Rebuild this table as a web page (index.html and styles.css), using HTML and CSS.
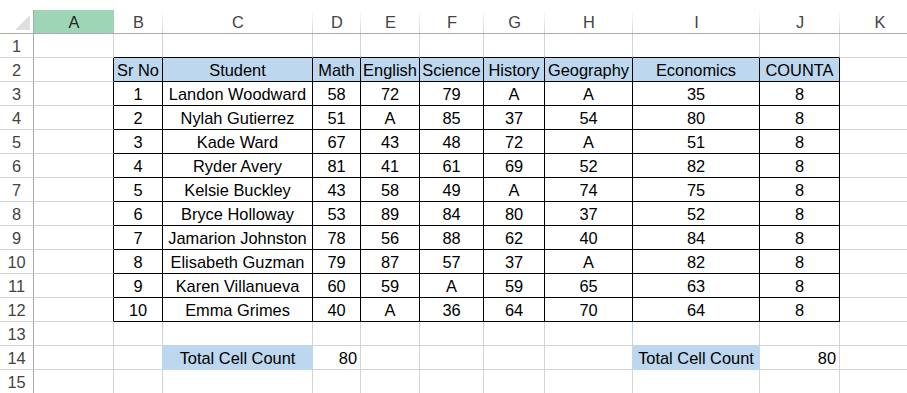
FILE: index.html
```html
<!DOCTYPE html>
<html>
<head>
<meta charset="utf-8">
<link rel="stylesheet" href="styles.css">
</head>
<body>
<div class="sheet">
  <div class="row hdr">
    <div class="corner"><span class="tri"></span></div>
    <div class="ch sel">A</div><div class="ch">B</div><div class="ch">C</div><div class="ch">D</div><div class="ch">E</div><div class="ch">F</div><div class="ch">G</div><div class="ch">H</div><div class="ch">I</div><div class="ch">J</div><div class="ch">K</div>
  </div>
  <div class="row">
    <div class="rh">1</div>
    <div class="c"></div><div class="c tt"></div><div class="c tt"></div><div class="c tt"></div><div class="c tt"></div><div class="c tt"></div><div class="c tt"></div><div class="c tt"></div><div class="c tt"></div><div class="c tt"></div><div class="c"></div>
  </div>
  <div class="row">
    <div class="rh">2</div>
    <div class="c tl"></div><div class="c t th">Sr No</div><div class="c t th">Student</div><div class="c t th">Math</div><div class="c t th">English</div><div class="c t th">Science</div><div class="c t th">History</div><div class="c t th">Geography</div><div class="c t th">Economics</div><div class="c t th">COUNTA</div><div class="c"></div>
  </div>
  <div class="row">
    <div class="rh">3</div>
    <div class="c tl"></div><div class="c t">1</div><div class="c t">Landon Woodward</div><div class="c t">58</div><div class="c t">72</div><div class="c t">79</div><div class="c t">A</div><div class="c t">A</div><div class="c t">35</div><div class="c t">8</div><div class="c"></div>
  </div>
  <div class="row">
    <div class="rh">4</div>
    <div class="c tl"></div><div class="c t">2</div><div class="c t">Nylah Gutierrez</div><div class="c t">51</div><div class="c t">A</div><div class="c t">85</div><div class="c t">37</div><div class="c t">54</div><div class="c t">80</div><div class="c t">8</div><div class="c"></div>
  </div>
  <div class="row">
    <div class="rh">5</div>
    <div class="c tl"></div><div class="c t">3</div><div class="c t">Kade Ward</div><div class="c t">67</div><div class="c t">43</div><div class="c t">48</div><div class="c t">72</div><div class="c t">A</div><div class="c t">51</div><div class="c t">8</div><div class="c"></div>
  </div>
  <div class="row">
    <div class="rh">6</div>
    <div class="c tl"></div><div class="c t">4</div><div class="c t">Ryder Avery</div><div class="c t">81</div><div class="c t">41</div><div class="c t">61</div><div class="c t">69</div><div class="c t">52</div><div class="c t">82</div><div class="c t">8</div><div class="c"></div>
  </div>
  <div class="row">
    <div class="rh">7</div>
    <div class="c tl"></div><div class="c t">5</div><div class="c t">Kelsie Buckley</div><div class="c t">43</div><div class="c t">58</div><div class="c t">49</div><div class="c t">A</div><div class="c t">74</div><div class="c t">75</div><div class="c t">8</div><div class="c"></div>
  </div>
  <div class="row">
    <div class="rh">8</div>
    <div class="c tl"></div><div class="c t">6</div><div class="c t">Bryce Holloway</div><div class="c t">53</div><div class="c t">89</div><div class="c t">84</div><div class="c t">80</div><div class="c t">37</div><div class="c t">52</div><div class="c t">8</div><div class="c"></div>
  </div>
  <div class="row">
    <div class="rh">9</div>
    <div class="c tl"></div><div class="c t">7</div><div class="c t">Jamarion Johnston</div><div class="c t">78</div><div class="c t">56</div><div class="c t">88</div><div class="c t">62</div><div class="c t">40</div><div class="c t">84</div><div class="c t">8</div><div class="c"></div>
  </div>
  <div class="row">
    <div class="rh">10</div>
    <div class="c tl"></div><div class="c t">8</div><div class="c t">Elisabeth Guzman</div><div class="c t">79</div><div class="c t">87</div><div class="c t">57</div><div class="c t">37</div><div class="c t">A</div><div class="c t">82</div><div class="c t">8</div><div class="c"></div>
  </div>
  <div class="row">
    <div class="rh">11</div>
    <div class="c tl"></div><div class="c t">9</div><div class="c t">Karen Villanueva</div><div class="c t">60</div><div class="c t">59</div><div class="c t">A</div><div class="c t">59</div><div class="c t">65</div><div class="c t">63</div><div class="c t">8</div><div class="c"></div>
  </div>
  <div class="row">
    <div class="rh">12</div>
    <div class="c tl"></div><div class="c t">10</div><div class="c t">Emma Grimes</div><div class="c t">40</div><div class="c t">A</div><div class="c t">36</div><div class="c t">64</div><div class="c t">70</div><div class="c t">64</div><div class="c t">8</div><div class="c"></div>
  </div>
  <div class="row">
    <div class="rh">13</div>
    <div class="c"></div><div class="c"></div><div class="c bb"></div><div class="c"></div><div class="c"></div><div class="c"></div><div class="c"></div><div class="c br"></div><div class="c bb"></div><div class="c"></div><div class="c"></div>
  </div>
  <div class="row">
    <div class="rh">14</div>
    <div class="c"></div><div class="c br"></div><div class="c tot">Total Cell Count</div><div class="c num">80</div><div class="c"></div><div class="c"></div><div class="c"></div><div class="c br"></div><div class="c tot">Total Cell Count</div><div class="c num">80</div><div class="c"></div>
  </div>
  <div class="row">
    <div class="rh">15</div>
    <div class="c"></div><div class="c"></div><div class="c"></div><div class="c"></div><div class="c"></div><div class="c"></div><div class="c"></div><div class="c"></div><div class="c"></div><div class="c"></div><div class="c"></div>
  </div>
</div>
</body>
</html>
```

FILE: styles.css
```css
html, body {
  margin: 0;
  padding: 0;
  background: #ffffff;
}

.sheet {
  width: 907px;
  height: 393px;
  overflow: hidden;
  padding-top: 10px;
  box-sizing: border-box;
  font-family: "Liberation Sans", Arial, sans-serif;
  font-size: 16.4px;
  color: #000000;
}

.row {
  display: grid;
  grid-template-columns: 34px 80px 49px 150px 48px 59px 64px 61px 88px 127px 80px 80px;
  height: 24px;
}

.row > div {
  box-sizing: border-box;
  height: 24px;
  padding-top: 2px;
  line-height: 21px;
  text-align: center;
  white-space: nowrap;
}

.corner {
  position: relative;
  border-right: 1px solid #ababab;
  border-bottom: 1px solid #ababab;
}

.tri {
  position: absolute;
  left: 15px;
  top: 5px;
  width: 0;
  height: 0;
  border-left: 15px solid transparent;
  border-bottom: 15px solid #dfdfdf;
}

.ch {
  color: #444444;
  border-bottom: 1px solid #ababab;
  background: linear-gradient(#ffffff, #d5d5d5) right top / 1px 100% no-repeat;
}

.ch.sel {
  background: #9fd5b7;
  color: #262626;
}

.rh {
  color: #444444;
  border-right: 1px solid #ababab;
  border-bottom: 1px solid #d4d4d4;
}

.c {
  border-right: 1px solid #d4d4d4;
  border-bottom: 1px solid #d4d4d4;
}

.c.tt {
  border-bottom-color: #000000;
}

.c.tl {
  border-right-color: #000000;
}

.c.t {
  border-right-color: #000000;
  border-bottom-color: #000000;
}

.c.th {
  background: #bdd7ee;
}

.c.tot {
  background: #bdd7ee;
  border-right-color: #bdd7ee;
  border-bottom-color: #bdd7ee;
}

.c.bb {
  border-bottom-color: #bdd7ee;
}

.c.br {
  border-right-color: #bdd7ee;
}

.c.num {
  text-align: right;
  padding-right: 3px;
}
```
